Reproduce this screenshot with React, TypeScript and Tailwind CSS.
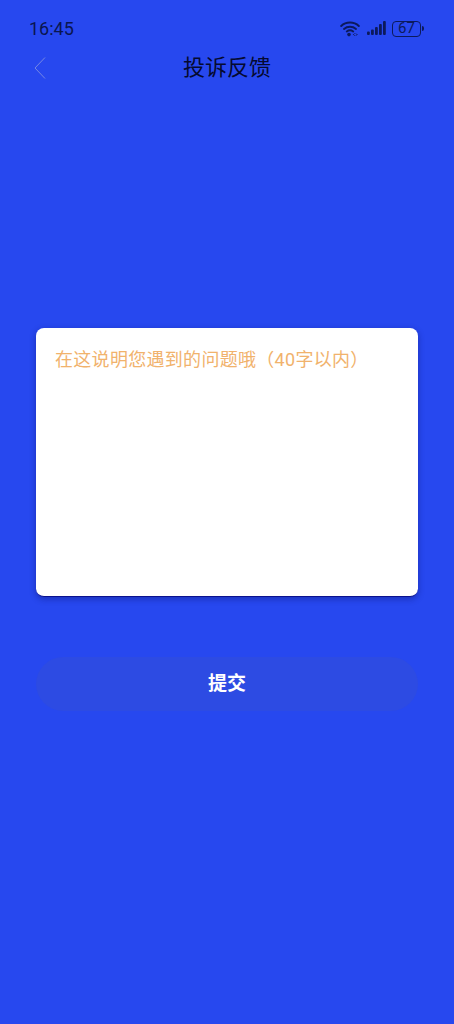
const FONT = "font-['Roboto','Noto_Sans_CJK_SC',sans-serif]"

function StatusIcons() {
  return (
    <div className="flex items-center">
      <svg width="20" height="17" viewBox="0 0 20 17" fill="none" stroke="#0c1a5c" strokeWidth="2" strokeLinecap="round">
        <path d="M1.2 6C6 1.4 14 1.4 18.8 6" />
        <path d="M4 8.9C7.4 6 12.6 6 16 8.9" />
        <path d="M6.8 11.5C8.6 10.2 11.4 10.2 13.2 11.5" />
        <circle cx="9" cy="14.6" r="1.8" fill="#0c1a5c" stroke="none" />
        <path d="M13.5 14.6L14.5 13.6M13.5 14.6L14.5 15.6M17 14.6L16 13.6M17 14.6L16 15.6" strokeWidth="0.8" />
      </svg>
      <svg className="ml-[7px]" width="20" height="15" viewBox="0 0 20 15" fill="#0c1a5c">
        <rect x="0" y="10.5" width="2.8" height="3.5" rx="1" />
        <rect x="4" y="8.5" width="2.8" height="5.5" rx="1" />
        <rect x="8" y="6" width="2.8" height="8" rx="1" />
        <rect x="12" y="3" width="2.8" height="11" rx="1" />
        <rect x="16" y="0" width="2.8" height="14" rx="1" />
      </svg>
      <div className="ml-[5px] flex h-[16px] w-[29px] items-center justify-center rounded-[4px] border border-[#0c1a5c] text-[15px] leading-none text-[#0c1a5c]">
        67
      </div>
      <div className="ml-[1px] h-[5px] w-[2px] rounded-r-sm bg-[#0c1a5c]" />
    </div>
  )
}

export default function App() {
  return (
    <div className={`${FONT} flex h-[1024px] w-full flex-col bg-[#2748ef]`}>
      <div className="flex h-[57px] items-center justify-between pl-[29px] pr-[30px]">
        <span className="text-[18px] leading-none text-[#0a1650]">16:45</span>
        <StatusIcons />
      </div>

      <div className="relative flex h-[22px] items-center justify-center">
        <svg className="absolute left-[33px] top-[-1px]" width="14" height="24" viewBox="0 0 14 24" fill="none" stroke="#7688e4" strokeWidth="1">
          <path d="M12 1.5L2 12L12 22.5" />
        </svg>
        <h1 className="text-[22px] font-normal leading-none text-[#050a30]">投诉反馈</h1>
      </div>

      <div className="mx-[36px] mt-[249px] h-[269px] rounded-[8px] border-b border-b-[#0a128f] bg-white px-[19px] py-[20px] shadow-[0_2px_6px_rgba(10,20,110,0.45)]">
        <p className="text-[18px] leading-[23px] tracking-[0.3px] text-[#f1b26c]">在这说明您遇到的问题哦（40字以内）</p>
      </div>

      <button className="mx-[36px] mt-[60px] h-[54px] rounded-full bg-[#2d4be3] text-[19px] font-bold text-white">
        提交
      </button>
    </div>
  )
}
